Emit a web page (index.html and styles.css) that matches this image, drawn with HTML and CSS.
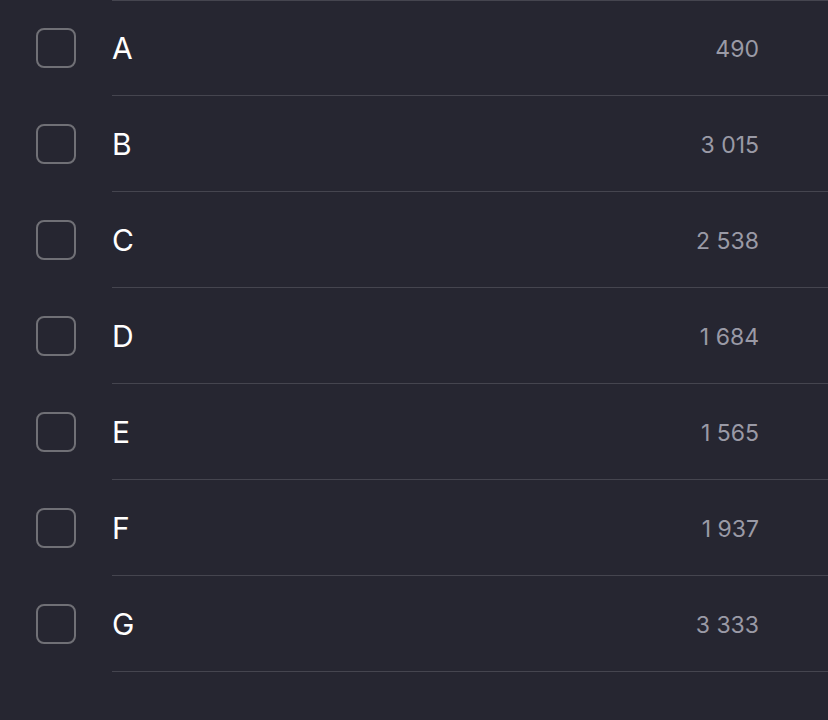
FILE: index.html
```html
<!DOCTYPE html>
<html>
<head>
<meta charset="utf-8">
<link rel="stylesheet" href="styles.css">
</head>
<body>
<ul class="list">
  <li class="row"><span class="check"></span><span class="label"><span class="name">A</span><span class="count">490</span></span></li>
  <li class="row"><span class="check"></span><span class="label"><span class="name">B</span><span class="count">3&nbsp;015</span></span></li>
  <li class="row"><span class="check"></span><span class="label"><span class="name">C</span><span class="count">2&nbsp;538</span></span></li>
  <li class="row"><span class="check"></span><span class="label"><span class="name">D</span><span class="count">1&nbsp;684</span></span></li>
  <li class="row"><span class="check"></span><span class="label"><span class="name">E</span><span class="count">1&nbsp;565</span></span></li>
  <li class="row"><span class="check"></span><span class="label"><span class="name">F</span><span class="count">1&nbsp;937</span></span></li>
  <li class="row"><span class="check"></span><span class="label"><span class="name">G</span><span class="count">3&nbsp;333</span></span></li>
</ul>
</body>
</html>
```
FILE: styles.css
```css
html, body {
  margin: 0;
  padding: 0;
  background: #262631;
  height: 100%;
}
body {
  font-family: Inter, "Noto Sans", sans-serif;
  overflow: hidden;
}
.list {
  list-style: none;
  margin: 0;
  padding: 0;
}
.list::before {
  content: "";
  display: block;
  margin-left: 112px;
  height: 1px;
  background: #45454f;
}
.row {
  display: flex;
  align-items: stretch;
  height: 96px;
}
.row:first-child {
  margin-top: -1px;
}
.check {
  flex: none;
  align-self: center;
  box-sizing: border-box;
  width: 40px;
  height: 40px;
  margin: 0 36px;
  border: 2px solid #707076;
  border-radius: 8px;
}
.label {
  flex: 1;
  display: flex;
  align-items: center;
  justify-content: space-between;
  padding-right: 69px;
  border-bottom: 1px solid #45454f;
}
.name {
  color: #ffffff;
  font-size: 30px;
  line-height: 1;
}
.count {
  color: #9a9aa6;
  font-size: 23px;
  line-height: 1;
  padding-top: 3px;
}
```
